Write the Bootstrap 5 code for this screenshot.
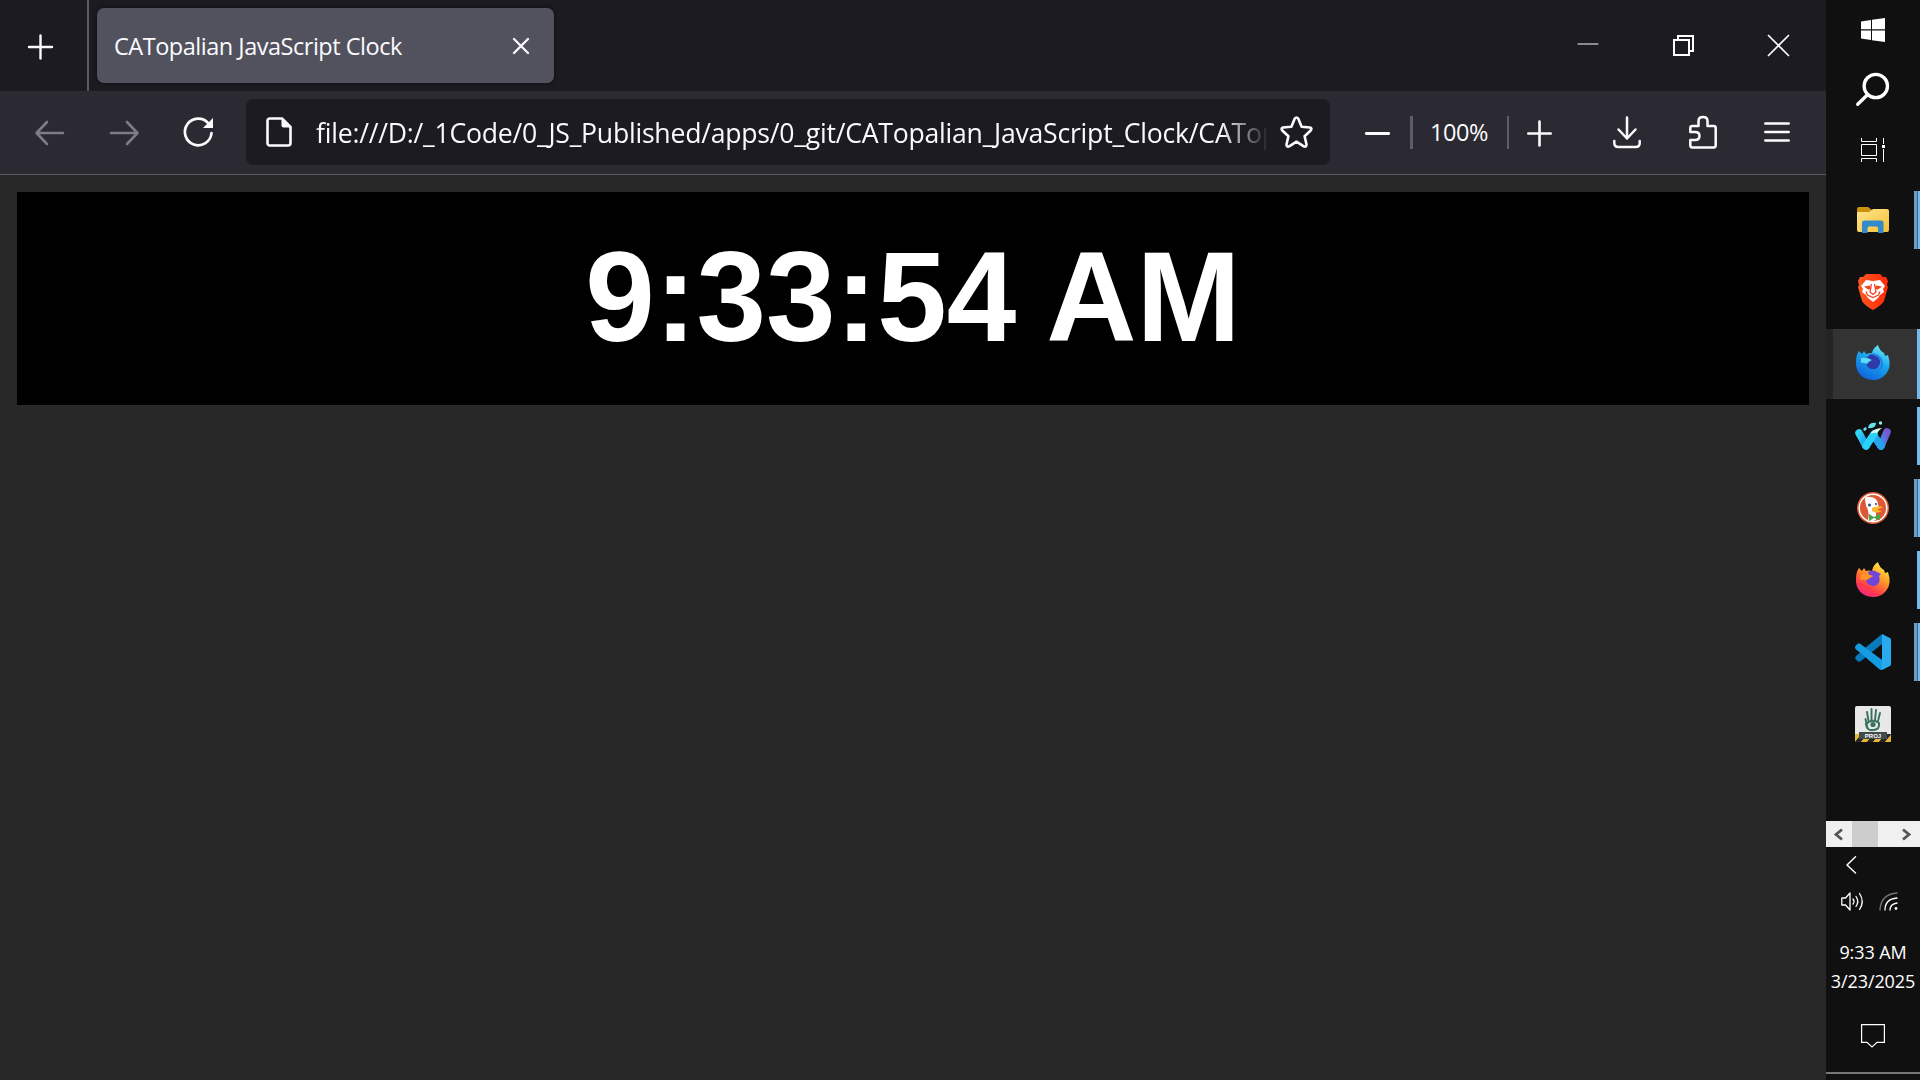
<!DOCTYPE html>
<html lang="en">
<head>
<meta charset="utf-8">
<title>CATopalian JavaScript Clock</title>
<link href="https://cdn.jsdelivr.net/npm/bootstrap@5.3.0/dist/css/bootstrap.min.css" rel="stylesheet">
<style>
body{width:1920px;height:1080px;overflow:hidden;background:#282828;color:#fbfbfe;font-family:"Open Sans","Noto Sans",sans-serif}
svg{display:block;flex:none;overflow:visible}
.ln{fill:none;stroke:currentColor;stroke-linecap:round;stroke-linejoin:round}
.browser{width:1826px}
.tabstrip{height:91px;background:#1c1b22}
.newtab{width:89px;border-right:2px solid #5b5b66;padding-left:28px}
.active-tab{width:457px;height:75px;margin:8px 0 0 8px;padding:0 25px 0 17px;background:#52525e;border-radius:7px;box-shadow:0 0 5px #0009}
.tab-title{font-size:23.5px;letter-spacing:-.48px;white-space:nowrap;padding-top:2px}
.winbtns{gap:74px;padding-right:37px}
.toolbar{height:84px;background:#2b2a33;border-bottom:1px solid #5b5b66;padding-left:35px}
.dim{color:#7d7c86}
.urlbar{width:1084px;height:66px;margin:0 0 1px 32px;background:#1c1b22;border-radius:7px;padding:0 17px 0 20px}
.urltext{width:951px;margin-left:24px;padding-top:2px;font-size:26.6px;letter-spacing:-.23px;line-height:40px;white-space:nowrap;-webkit-mask-image:linear-gradient(90deg,#000 905px,transparent 953px)}
.vsep{height:33px;background:#5e5d69}
.zoomtxt{font-size:23.5px;letter-spacing:-.4px;width:59px;white-space:nowrap}
.viewport{padding:17px}
.clockface{height:213px;background:#000;padding-bottom:4px}
.clocktext{font:bold 125px/1 "Liberation Sans",Arial,sans-serif;color:#fff;transform:scaleY(1.025);white-space:pre}
.taskbar{width:94px;height:1080px;background:#101010;color:#fff}
.sys-slot{height:60px}
.app-slot{height:72px;padding-left:29px;position:relative}
.app-slot.current{background:linear-gradient(#333,#333) 7px 1px/84px 70px no-repeat,linear-gradient(#242424,#242424) 0 1px/7px 70px no-repeat}
.run::after{content:"";position:absolute;right:0;top:7px;width:3px;height:58px;background:#76b9ed}
.run.multi::after{width:6px;background:linear-gradient(90deg,#679fc9 3px,#3e6583 3px 4px,#76b9ed 4px)}
.run.current::after{top:1px;height:70px}
.hscroll{height:26px;margin-top:61px;background:#f0f0f0;color:#555}
.thumb{width:26px;height:26px;background:#cdcdcd}
.datetime{font-size:18px;line-height:29px;letter-spacing:-.1px;margin-top:27px;white-space:nowrap}
.showdesk{height:2px;background:#777;margin-top:24px}
</style>
<script src="https://cdn.jsdelivr.net/npm/bootstrap@5.3.0/dist/js/bootstrap.bundle.min.js"></script>
</head>
<body class="d-flex">
<div class="browser d-flex flex-column">
  <header class="tabstrip d-flex">
    <div class="newtab d-flex align-items-center"><svg width="25" height="26" class="ln mt-1" stroke-width="2.4"><path d="M1 12H24M12.500 .5V23.500"/></svg></div>
    <div class="active-tab d-flex align-items-center justify-content-between"><span class="tab-title">CATopalian JavaScript Clock</span><svg width="16" height="16" class="ln" stroke-width="2.3"><path d="M1 1L15 15M15 1L1 15"/></svg></div>
    <div class="winbtns d-flex align-items-center ms-auto">
      <svg width="21" height="21" class="ln" stroke-width="1"><path d="M0 9H20"/></svg>
      <svg width="21" height="21" fill="none" stroke="#fff" stroke-width="2"><path d="M1 5H16V20H1ZM5 4V1H20V16H17"/></svg>
      <svg width="21" height="21" class="ln" stroke-width="1.700"><path d="M.5 .5L20.500 20.500M20.500 .5L.5 20.500"/></svg>
    </div>
  </header>
  <nav class="toolbar d-flex align-items-center">
    <svg width="29" height="26" class="ln dim" stroke-width="2.600"><path d="M28 13H1.500M12 2L1.500 13L12 24"/></svg>
    <svg width="29" height="26" class="ln dim ms-5" stroke-width="2.600"><path d="M-1 13H25.500M15 2L25.500 13L15 24"/></svg>
    <svg width="30" height="30" class="ln" stroke-width="2.700" style="margin-left:43px"><path d="M24.500 5.500A13.300 13.300 0 1 0 27.500 15"/><path d="M29 0V10H19Z" fill="currentColor" stroke="none"/></svg>
    <div class="urlbar d-flex align-items-center">
      <svg width="26" height="30" class="ln" stroke-width="2.600"><path d="M4 1.500H16L24.500 10V26Q24.500 28.500 22 28.500H4Q1.500 28.500 1.500 26V4Q1.500 1.500 4 1.500Z"/><path d="M15.500 1L25 10.500H17.500Q15.500 10.500 15.500 8.500Z" fill="currentColor" stroke="none"/></svg>
      <div class="urltext">file:///D:/_1Code/0_JS_Published/apps/0_git/CATopalian_JavaScript_Clock/CATop</div>
      <svg width="33" height="32" class="ln ms-auto" stroke-width="2.600"><path d="M14.800 2.600Q16.500 .300 18.200 2.600L21.600 10.700L30 11.500Q32.400 12.300 30.700 14.500L24.600 20.200L26.500 28.500Q26.500 31.500 23.800 30.300L16.500 25.700L9.200 30.300Q6.500 31.500 6.500 28.500L8.400 20.200L2.300 14.500Q.6 12.300 3 11.500L11.400 10.700Z"/></svg>
    </div>
    <svg width="25" height="4" class="ln" stroke-width="2.800" style="margin-left:35px"><path d="M1.300 2.500H23.700"/></svg>
    <div class="vsep" style="width:3px;margin-left:20px"></div>
    <span class="zoomtxt" style="margin-left:17px">100%</span>
    <div class="vsep" style="width:2px;margin-left:18px"></div>
    <svg width="25" height="26" class="ln" stroke-width="2.600" style="margin-left:18px"><path d="M1.300 13.500H23.700M12.500 1.500V25.500"/></svg>
    <svg width="28" height="32" class="ln" stroke-width="2.500" style="margin-left:61px"><path d="M14 .5V21.500M5.500 12.500L14 21.500L22.500 12.500M1.300 24V26Q1.300 30 5.300 30H22.700Q26.700 30 26.700 26V24"/></svg>
    <svg width="28" height="33" class="ln mb-1" stroke-width="2.500" style="margin-left:48px"><path d="M1.300 18V14Q1.300 12 3.300 12H9.500V7Q9.500 3 14 3T18.500 7V12H24.700Q26.700 12 26.700 14V31Q26.700 33.500 24.700 33.500H3.300Q1.300 33.500 1.300 31V26H6Q10.500 26 10.500 22T6 18Z"/></svg>
    <svg width="26" height="20" class="ln mb-1" stroke-width="2.500" style="margin-left:47px"><path d="M1.300 2.500H24.700M1.300 11H24.700M1.300 19.500H24.700"/></svg>
  </nav>
  <main class="viewport">
    <div class="clockface d-flex align-items-center justify-content-center"><div class="clocktext">9:33:54 AM</div></div>
  </main>
</div>

<aside class="taskbar d-flex flex-column">
  <div class="sys-slot d-flex align-items-center" style="padding-left:35px"><svg width="24" height="24" fill="#fff"><path d="M0 3.400L10 2V11.300H0ZM11 1.800L24 0V11.300H11ZM0 12.500H10V22L0 20.600ZM11 12.500H24V24L11 22.200Z"/></svg></div>
  <div class="sys-slot d-flex align-items-center pb-1" style="padding-left:30px"><svg width="33" height="33" class="ln" stroke-width="3.300"><circle cx="19.800" cy="14" r="11.700"/><path d="M11.500 22.700L1.700 32.300"/></svg></div>
  <div class="sys-slot d-flex align-items-center mb-1" style="padding-left:35px"><svg width="24" height="24" fill="none" stroke="#fff" stroke-width="1"><path d="M.5 0V3.500H15.500V0M.5 6.500H15.500V17.500H.5ZM.5 24V20.500H15.500V24M22.500 0V6M22.500 11V24"/><path d="M21 7H24V10H21Z" fill="#fff" stroke="none"/></svg></div>

  <div class="app-slot run multi d-flex align-items-center"><svg width="36" height="36"><defs><linearGradient id="fold" x2="1" y2="1"><stop stop-color="#ffe48c"/><stop offset="1" stop-color="#f4c238"/></linearGradient></defs><path d="M2 7Q2 5 4 5H13L17 8V14H2Z" fill="#cb920f"/><path d="M2 11Q2 10 3 10H14L18 7H32Q34 7 34 9V28Q34 30 32 30H4Q2 30 2 28Z" fill="url(#fold)"/><path d="M7 31V21Q7 18.500 9.500 18.500H26Q28.500 18.500 28.500 21V31H23V26Q23 24.500 21.500 24.500H14Q12.500 24.500 12.500 26V31Z" fill="#328acb"/></svg></div>
  <div class="app-slot d-flex align-items-center"><svg width="36" height="36"><defs><linearGradient id="brave" x2="1"><stop stop-color="#ff5a22"/><stop offset="1" stop-color="#ff2808"/></linearGradient></defs><path d="M11 0H25L28 3L31 3L33 7L32 11L33 13L29 27Q27 31 18 36Q9 31 7 27L3 13L4 11L3 7L5 3L8 3Z" fill="url(#brave)"/><path d="M11 6L18 7L25 6L30 12L28 15L29 18L25 21L23 24L18 28L13 24L11 21L7 18L8 15L6 12Z" fill="#fff"/><path d="M9 12.500L15 11.500L16 15L13 15.500ZM27 12.500L21 11.500L20 15L23 15.500Z" fill="#f34420"/><path d="M16.500 10L15 18L18 20.500L21 18L19.500 10M11 17.500L12.500 21L18 23.500L23.500 21L25 17.500" fill="none" stroke="#f34420" stroke-width="1.300"/></svg></div>
  <div class="app-slot current run d-flex align-items-center pb-1"><svg width="36" height="36"><defs><linearGradient id="dev" x1=".8" y1="0" x2=".3" y2="1"><stop stop-color="#75eef7"/><stop offset=".45" stop-color="#19a8ed"/><stop offset="1" stop-color="#1060df"/></linearGradient></defs><path d="M4 7L7 10L9 7L11 10Q14 9 17 9Q18 4 23 1Q24 6 29 9L30 12L33 11Q37 23 31 30Q26 36 18 36C7 36 0 27 1 18Q1 11 4 7Z" fill="url(#dev)"/><path d="M14 11Q18 9 22 12Q27 16 24 22Q21 26 16 25Q10 23 12 17L16 16L10 14Q13 14 14 11Z" fill="#2d3aa8"/><path d="M6 14Q12 13 17 16Q13 18 12 20Q9 18 6 19Z" fill="#5bdcf7"/><path d="M18 10Q26 12 27 19Q27 26 19 28" fill="none" stroke="#1d82e8" stroke-width="2"/></svg></div>
  <div class="app-slot run d-flex align-items-center"><svg width="36" height="36"><defs><linearGradient id="wf" x2="1" y2="1"><stop stop-color="#35d5f5"/><stop offset="1" stop-color="#1595ee"/></linearGradient><linearGradient id="wf2" x1="1" x2="0" y2="1"><stop stop-color="#7858ce"/><stop offset="1" stop-color="#3498ef"/></linearGradient></defs><g fill="none" stroke-linecap="round"><path d="M32 14L26 28" stroke="url(#wf2)" stroke-width="7.500"/><path d="M4 15L11 28" stroke="url(#wf)" stroke-width="7.500"/><path d="M19 18L26 28" stroke="#27a3ed" stroke-width="7.500"/><path d="M11 28L19 16" stroke="#29d1f8" stroke-width="7.500"/></g><path d="M15 16Q19 10 27 10Q24 12 22 15Q18 14 15 16Z" fill="#dcfffa"/><path d="M13 10Q14 4 21 5Q21 11 13 10ZM9 13Q7 10 11 9Q13 12 9 13Z" fill="#62e2ef"/><circle cx="25.500" cy="5" r="1.700" fill="#79f4ef"/></svg></div>
  <div class="app-slot run multi d-flex align-items-center"><svg width="36" height="36"><circle cx="18" cy="18" r="16" fill="#de5833"/><circle cx="18" cy="18" r="13.800" fill="none" stroke="#fff" stroke-width="1.500"/><path d="M10 9Q10 6 15 7Q22 7 23 14L24 18L21 20V30Q17 32 13 30Q15 22 11 16Z" fill="#fff"/><path d="M17 18Q23 15 28 17L22 20L27 21Q22 24 17 21Z" fill="#fdb82c"/><path d="M14 24L19 27L25 24V30L19 28L14 31Z" fill="#40a94d"/><circle cx="14.500" cy="15" r="1.500" fill="#2d4f8e"/><circle cx="21" cy="14" r="1.100" fill="#2d4f8e"/></svg></div>
  <div class="app-slot run d-flex align-items-center"><svg width="36" height="36"><defs><linearGradient id="ff" x1=".8" y1="0" x2=".25" y2="1"><stop stop-color="#fff44f"/><stop offset=".4" stop-color="#ff9c25"/><stop offset=".75" stop-color="#ff3c4a"/><stop offset="1" stop-color="#f12487"/></linearGradient></defs><path d="M4 6L7 9L9 6L11 9Q14 8 17 9Q18 3 23 0Q24 5 29 8L30 11L33 10Q37 22 31 29Q26 35 18 35C7 35 0 26 1 17Q1 10 4 6Z" fill="url(#ff)"/><path d="M13 10Q18 7 22 10L26 12L24 14Q26 20 22 23Q17 26 12 21Q10 18 14 16L18 14L14 13Z" fill="#7046da"/><path d="M6 13Q11 11 18 14Q14 17 11 18Q8 17 5 18Z" fill="#ff9427"/></svg></div>
  <div class="app-slot run multi d-flex align-items-center"><svg width="36" height="36"><path d="M27 0L10 15L4 10.500Q3 10 2 11L.5 12.500Q-.5 13.500 .5 15L27 36V26L10 14Z" fill="#0f7fc4"/><path d="M27 0V10L6 27Q4 28.500 2.500 27L.5 25Q-.5 23.500 1 22Z" fill="#087abd"/><path d="M0 13.500Q0 12 3 9.500Q4 9 5.500 10L27 26V36Q25 36 24 35L1 15Z" fill="#149be0"/><path d="M27 0L35 4Q36 4.500 36 6V30Q36 31.500 35 32L27 36Z" fill="#29a9ee"/></svg></div>
  <div class="app-slot d-flex align-items-center"><svg width="36" height="36"><defs><pattern id="haz" width="12" height="8" patternUnits="userSpaceOnUse" patternTransform="skewX(-40)"><path fill="#252525" d="M0 0H12V8H0Z"/><path fill="#e7b932" d="M0 0H6V8H0Z"/></pattern></defs><rect width="36" height="36" rx="2" fill="#e8e8e8"/><g fill="none" stroke="#37725c" stroke-linecap="round"><path stroke-width="1.900" d="M13.500 15L12 6M16.500 14V3M20 14L21 4M23 15L25 7M12 20L10.500 13"/><path stroke-width="2" d="M11 18Q12 25 18 24Q25 24 24 17Q17 12 11 18"/></g><circle cx="18" cy="18.500" r="2.600" fill="#37725c"/><rect y="28" width="36" height="8" rx="1" fill="url(#haz)"/><rect x="4" y="26" width="28" height="7" fill="#414b4b"/><text x="18" y="32" text-anchor="middle" font-size="6" font-weight="700" font-family="Liberation Sans" fill="#fff">PROJ</text></svg></div>

  <div class="hscroll d-flex align-items-center">
    <svg width="26" height="26" fill="none" stroke="currentColor" stroke-width="2.800"><path d="M16 8.500L10 13.500L16 18.500"/></svg><div class="thumb"></div><svg width="26" height="26" class="ms-auto" fill="none" stroke="currentColor" stroke-width="2.800"><path d="M9 8.500L15 13.500L9 18.500"/></svg>
  </div>
  <svg width="11" height="18" class="ln" stroke-width="1.500" style="margin:9px 0 0 20px"><path d="M9.500 .8L1 9L9.500 17"/></svg>
  <div class="d-flex" style="margin:18px 0 0 15px;gap:17px">
    <svg width="22" height="19" class="ln" stroke-width="1.300"><path d="M.8 6H4.500L9 1V18L4.500 13H.8ZM12 7Q14 9.500 12 12M15 4.500Q18.500 9.500 15 14.500M18.500 1.500Q24 9.500 18.500 17.500"/></svg>
    <svg width="20" height="19" class="ln" stroke-width="1.300"><path stroke="#777" d="M0 18Q1 2 17 1"/><path d="M5 18Q5 7 17 6M10 18Q10 12 17 11"/><circle cx="16" cy="16.500" r="1.400" fill="#fff" stroke="none"/></svg>
  </div>
  <div class="datetime text-center"><div>9:33 AM</div><div>3/23/2025</div></div>
  <svg width="24" height="24" fill="none" stroke="#fff" stroke-width="1.200" style="margin:28px 0 0 35px"><path d="M.6 .6H23.400V18.400H16L11 23L6 18.400H.6Z"/></svg>
  <div class="showdesk"></div>
</aside>
</body>
</html>
